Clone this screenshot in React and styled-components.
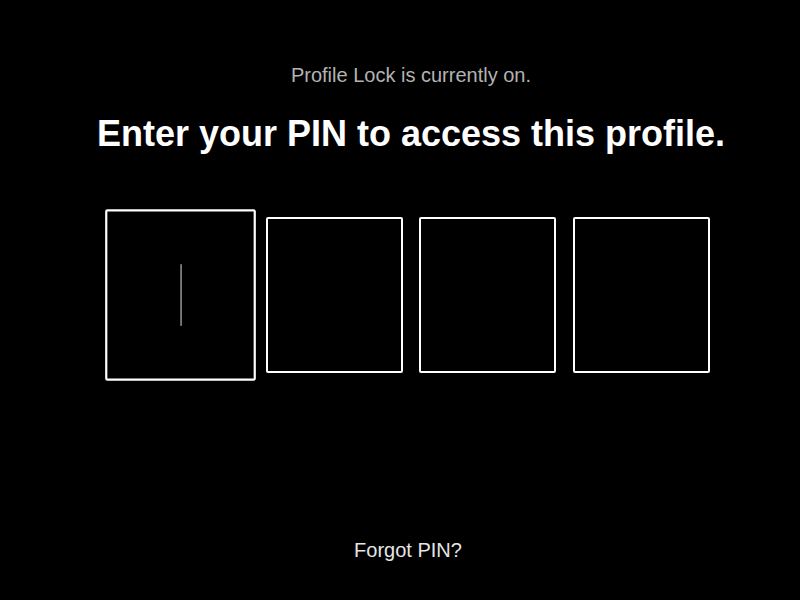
import React from "react";
import styled, { createGlobalStyle } from "styled-components";

const GlobalStyle = createGlobalStyle`
  html, body {
    margin: 0;
    padding: 0;
    background: #000;
  }
  body {
    font-family: "Liberation Sans", Arial, sans-serif;
  }
`;

const Page = styled.main`
  width: 800px;
  height: 600px;
  box-sizing: border-box;
  padding-left: 22px;
  display: flex;
  flex-direction: column;
  align-items: center;
  background: #000;
  color: #fff;
`;

const Status = styled.div`
  margin-top: 63px;
  font-size: 20px;
  line-height: 24px;
  color: #b3b3b3;
`;

const Title = styled.h1`
  margin: 25px 0 0;
  font-size: 36px;
  line-height: 44px;
  font-weight: 700;
  color: #fff;
`;

const PinRow = styled.div`
  margin-top: 61px;
  display: flex;
  gap: 16.5px;
`;

const PinBox = styled.div`
  position: relative;
  width: 137px;
  height: 156px;
  box-sizing: border-box;
  border: 2px solid #fff;
  border-radius: 2px;
  background: #000;
  transform: ${(p) => (p.$active ? "scale(1.1)" : "none")};
`;

const Caret = styled.span`
  position: absolute;
  left: 50%;
  top: 50%;
  width: 1px;
  height: 56px;
  background: #ccc;
  transform: translate(-50%, -50%);
`;

const Forgot = styled.button`
  margin-top: auto;
  margin-bottom: 38px;
  padding: 0;
  border: 0;
  background: none;
  font-family: inherit;
  font-size: 20px;
  line-height: 24px;
  color: #e5e5e5;
  cursor: pointer;
  transform: translateX(-3px);
`;

export default function App() {
  return (
    <>
      <GlobalStyle />
      <Page>
        <Status>Profile Lock is currently on.</Status>
        <Title>Enter your PIN to access this profile.</Title>
        <PinRow>
          {[0, 1, 2, 3].map((i) => (
            <PinBox key={i} $active={i === 0}>
              {i === 0 && <Caret />}
            </PinBox>
          ))}
        </PinRow>
        <Forgot>Forgot PIN?</Forgot>
      </Page>
    </>
  );
}
